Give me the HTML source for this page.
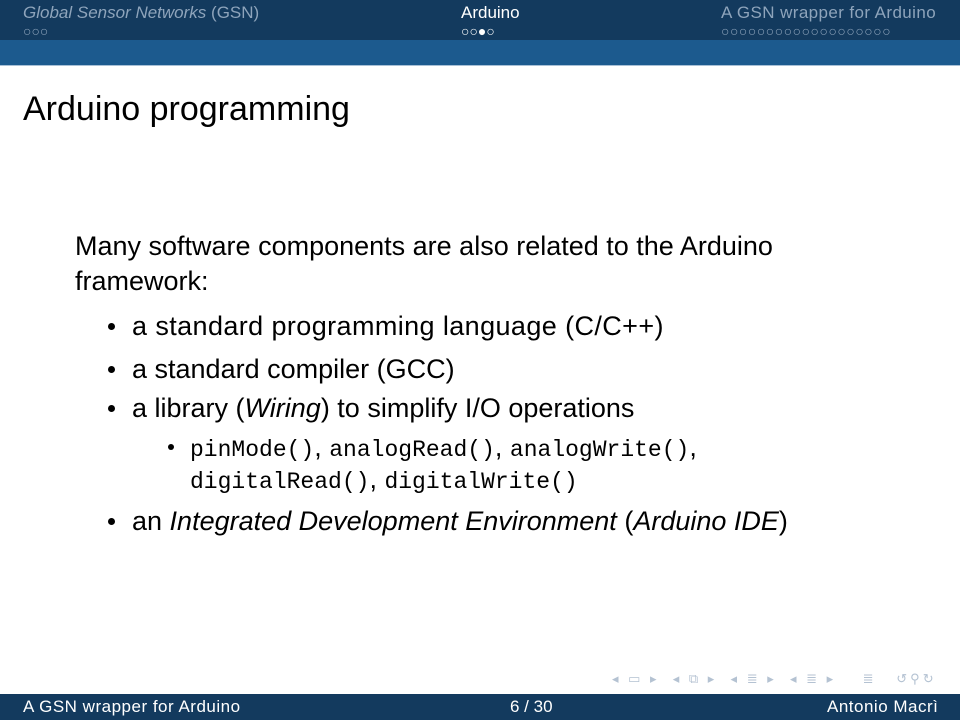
<!DOCTYPE html>
<html><head><meta charset="utf-8"><style>
body{margin:0;width:960px;height:720px;position:relative;overflow:hidden;background:#fff;font-family:"Liberation Sans",sans-serif;color:#000}
.a{position:absolute;white-space:nowrap}
.t{font-size:27px;line-height:30px}
.m{font-family:"Liberation Mono",monospace;font-size:23px}
.b{position:absolute;width:7px;height:7px;border-radius:50%;background:#000}
.h{font-size:17px;line-height:20px}
.d{font-size:14px;letter-spacing:0px;line-height:14px}
</style></head><body>
<div class="a" style="left:0;top:0;width:960px;height:40px;background:#133a5e"></div>
<div class="a" style="left:0;top:40px;width:960px;height:25px;background:#1c5a8e"></div>
<div class="a" style="left:0;top:65px;width:960px;height:1px;background:#a8c0d6"></div>
<div class="a h" style="left:23px;top:3px;color:#8ea4bb"><i>Global Sensor Networks</i> (GSN)</div>
<div class="a d" style="left:23px;top:24px;color:#8ea4bb">○○○</div>
<div class="a h" style="left:461px;top:3px;color:#fff">Arduino</div>
<div class="a d" style="left:461px;top:24px;color:#fff">○○●○</div>
<div class="a h" style="left:721px;top:3px;color:#8ea4bb;letter-spacing:0.4px">A GSN wrapper for Arduino</div>
<div class="a d" style="left:721px;top:24px;color:#8ea4bb;letter-spacing:0.5px">○○○○○○○○○○○○○○○○○○○</div>

<div class="a" style="left:23px;top:89px;font-size:34px;line-height:40px">Arduino programming</div>

<div class="a t" style="left:75px;top:231px">Many software components are also related to the Arduino</div>
<div class="a t" style="left:75px;top:266px">framework:</div>
<div class="b" style="left:108px;top:323px"></div>
<div class="a t" style="left:132px;top:311px;letter-spacing:0.4px">a standard programming language (C/C++)</div>
<div class="b" style="left:108px;top:366px"></div>
<div class="a t" style="left:132px;top:354px">a standard compiler (GCC)</div>
<div class="b" style="left:108px;top:405px"></div>
<div class="a t" style="left:132px;top:393px">a library (<i>Wiring</i>) to simplify I/O operations</div>
<div class="b" style="left:168px;top:444px;width:6px;height:6px"></div>
<div class="a t" style="left:190px;top:432px"><span class="m">pinMode()</span>, <span class="m">analogRead()</span>, <span class="m">analogWrite()</span>,</div>
<div class="a t" style="left:190px;top:464px"><span class="m">digitalRead()</span>, <span class="m">digitalWrite()</span></div>
<div class="b" style="left:108px;top:518px"></div>
<div class="a t" style="left:132px;top:506px">an <i>Integrated Development Environment</i> (<i>Arduino IDE</i>)</div>

<div class="a" style="left:612px;top:671px;font-size:13px;color:#b4c2d2;letter-spacing:3px">◂ ▭ ▸ &nbsp;◂ ⧉ ▸ &nbsp;◂ ≣ ▸ &nbsp;◂ ≣ ▸ &nbsp;&nbsp; ≣ &nbsp; ↺⚲↻</div>
<div class="a" style="left:0;top:694px;width:960px;height:26px;background:#133a5e"></div>
<div class="a" style="left:23px;top:697px;font-size:17px;line-height:20px;color:#fff;letter-spacing:0.5px">A GSN wrapper for Arduino</div>
<div class="a" style="left:510px;top:697px;font-size:17px;line-height:20px;color:#fff">6 / 30</div>
<div class="a" style="left:827px;top:697px;font-size:17px;line-height:20px;color:#fff;letter-spacing:0.5px">Antonio Macrì</div>
</body></html>
